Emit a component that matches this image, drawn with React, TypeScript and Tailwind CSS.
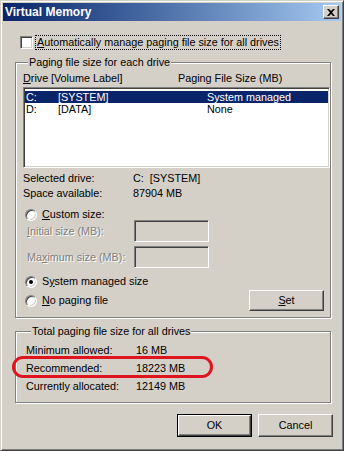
import type { ReactNode } from 'react';

const raised =
  'bg-[#d4d0c8] border border-t-white border-l-white border-b-[#404040] border-r-[#404040] shadow-[inset_-1px_-1px_#808080,inset_1px_1px_#d4d0c8]';
const sunken =
  'border border-t-[#808080] border-l-[#808080] border-b-white border-r-white shadow-[inset_1px_1px_#404040,inset_-1px_-1px_#d4d0c8]';

function Radio({ checked }: { checked?: boolean }) {
  return (
    <span
      className={`w-[12px] h-[12px] shrink-0 rounded-full bg-white flex items-center justify-center ${sunken}`}
    >
      {checked && <span className="w-[4px] h-[4px] rounded-full bg-black" />}
    </span>
  );
}

function Button({ children, isDefault }: { children: ReactNode; isDefault?: boolean }) {
  if (isDefault) {
    return (
      <div className="w-[75px] h-[23px] border border-black flex">
        <div className={`flex-1 flex items-center justify-center ${raised}`}>{children}</div>
      </div>
    );
  }
  return (
    <div className={`w-[75px] h-[23px] flex items-center justify-center ${raised}`}>{children}</div>
  );
}

function Group({ title, children, className }: { title: string; children: ReactNode; className?: string }) {
  return (
    <div
      className={`w-[316px] border border-[#808080] shadow-[inset_1px_1px_#fff,1px_1px_#fff] flex flex-col ${className ?? ''}`}
    >
      <span className="-mt-[7px] ml-[5px] w-fit bg-[#d4d0c8] px-[1px] h-[13px]">{title}</span>
      {children}
    </div>
  );
}

function TextBox() {
  return <div className={`w-[75px] h-[22px] bg-[#d4d0c8] ${sunken}`} />;
}

const disabled = 'text-[#808080] [text-shadow:1px_1px_0_#fff]';

export default function App() {
  return (
    <div className="relative w-[344px] h-[451px] bg-[#d4d0c8] border border-t-[#d4d0c8] border-l-[#d4d0c8] border-b-[#404040] border-r-[#404040] shadow-[inset_1px_1px_#fff,inset_-1px_-1px_#808080] p-[2px] font-['Liberation_Sans',Arial,sans-serif] text-[10.8px] leading-[13px] text-black">
      {/* title bar */}
      <div className="h-[18px] flex items-center justify-between bg-linear-to-r from-[#0a246a] to-[#a6caf0] pl-[2px] pr-[2px]">
        <span className="text-white font-bold text-[12px]">Virtual Memory</span>
        <div className={`w-[16px] h-[14px] flex items-center justify-center ${raised}`}>
          <svg width="8" height="7" viewBox="0 0 8 7">
            <path d="M0 0h2l2 2 2-2h2L5 3.5 8 7H6L4 5 2 7H0l3-3.5z" fill="#000" />
          </svg>
        </div>
      </div>

      <div className="flex flex-col pl-[12px] pr-[8px]">
        {/* auto manage */}
        <div className="mt-[14px] ml-[5px] h-[15px] flex items-center">
          <span className={`w-[13px] h-[13px] bg-white ${sunken}`} />
          <span className="ml-[2px] px-[1px] border border-dotted border-black">
            <u>A</u>utomatically manage paging file size for all drives
          </span>
        </div>

        {/* per drive */}
        <Group title="Paging file size for each drive" className="mt-[12px] pl-[7px] pb-[6px]">
          <div className="mt-[3px] h-[13px] flex">
            <span className="w-[28px]">
              <u>D</u>rive
            </span>
            <span className="w-[127px]">[Volume Label]</span>
            <span>Paging File Size (MB)</span>
          </div>

          <div className={`mt-[2px] w-[307px] h-[81px] bg-white pt-[3px] pl-[1px] pr-[1px] ${sunken}`}>
            <div className="h-[12px] flex items-center bg-[#0a246a] text-white pl-[1px]">
              <span className="w-[32px]">C:</span>
              <span className="w-[149px]">[SYSTEM]</span>
              <span>System managed</span>
            </div>
            <div className="h-[12px] flex items-center pl-[1px]">
              <span className="w-[32px]">D:</span>
              <span className="w-[149px]">[DATA]</span>
              <span>None</span>
            </div>
          </div>

          <div className="mt-[4px] flex">
            <span className="w-[110px]">Selected drive:</span>
            <span>C:&nbsp;&nbsp;[SYSTEM]</span>
          </div>
          <div className="mt-[2px] flex">
            <span className="w-[110px]">Space available:</span>
            <span>87904 MB</span>
          </div>

          <div className="mt-[8px] h-[13px] ml-[2px] flex items-center">
            <Radio />
            <span className="ml-[5px]">
              <u>C</u>ustom size:
            </span>
          </div>
          <div className="-mt-[1px] h-[22px] flex items-center">
            <span className={`pl-[4px] w-[111px] ${disabled}`}>
              <u>I</u>nitial size (MB):
            </span>
            <TextBox />
          </div>
          <div className="mt-[4px] h-[22px] flex items-center">
            <span className={`pl-[4px] w-[111px] ${disabled}`}>
              Ma<u>x</u>imum size (MB):
            </span>
            <TextBox />
          </div>

          <div className="mt-[7px] h-[13px] ml-[2px] flex items-center">
            <Radio checked />
            <span className="ml-[5px]">
              S<u>y</u>stem managed size
            </span>
          </div>
          <div className="mt-[2px] h-[21px] flex items-center justify-between">
            <div className="ml-[2px] flex items-center">
              <Radio />
              <span className="ml-[5px]">
                <u>N</u>o paging file
              </span>
            </div>
            <div className={`mr-[6px] w-[75px] h-[21px] flex items-center justify-center ${raised}`}>
              <span>
                <u>S</u>et
              </span>
            </div>
          </div>
        </Group>

        {/* totals */}
        <Group title="Total paging file size for all drives" className="mt-[13px] pl-[10px] pb-[9px]">
          <div className="mt-[6px] flex">
            <span className="w-[110px]">Minimum allowed:</span>
            <span>16 MB</span>
          </div>
          <div className="mt-[5px] flex">
            <span className="w-[110px]">Recommended:</span>
            <span>18223 MB</span>
          </div>
          <div className="mt-[5px] flex">
            <span className="w-[110px]">Currently allocated:</span>
            <span>12149 MB</span>
          </div>
        </Group>

        <div className="mt-[11px] flex justify-end gap-[6px]">
          <Button isDefault>OK</Button>
          <Button>Cancel</Button>
        </div>
      </div>

      {/* red annotation */}
      <div className="absolute left-[11px] top-[355px] w-[201px] h-[22px] rounded-[11px] border-[3px] border-[#e0141e]" />
    </div>
  );
}
